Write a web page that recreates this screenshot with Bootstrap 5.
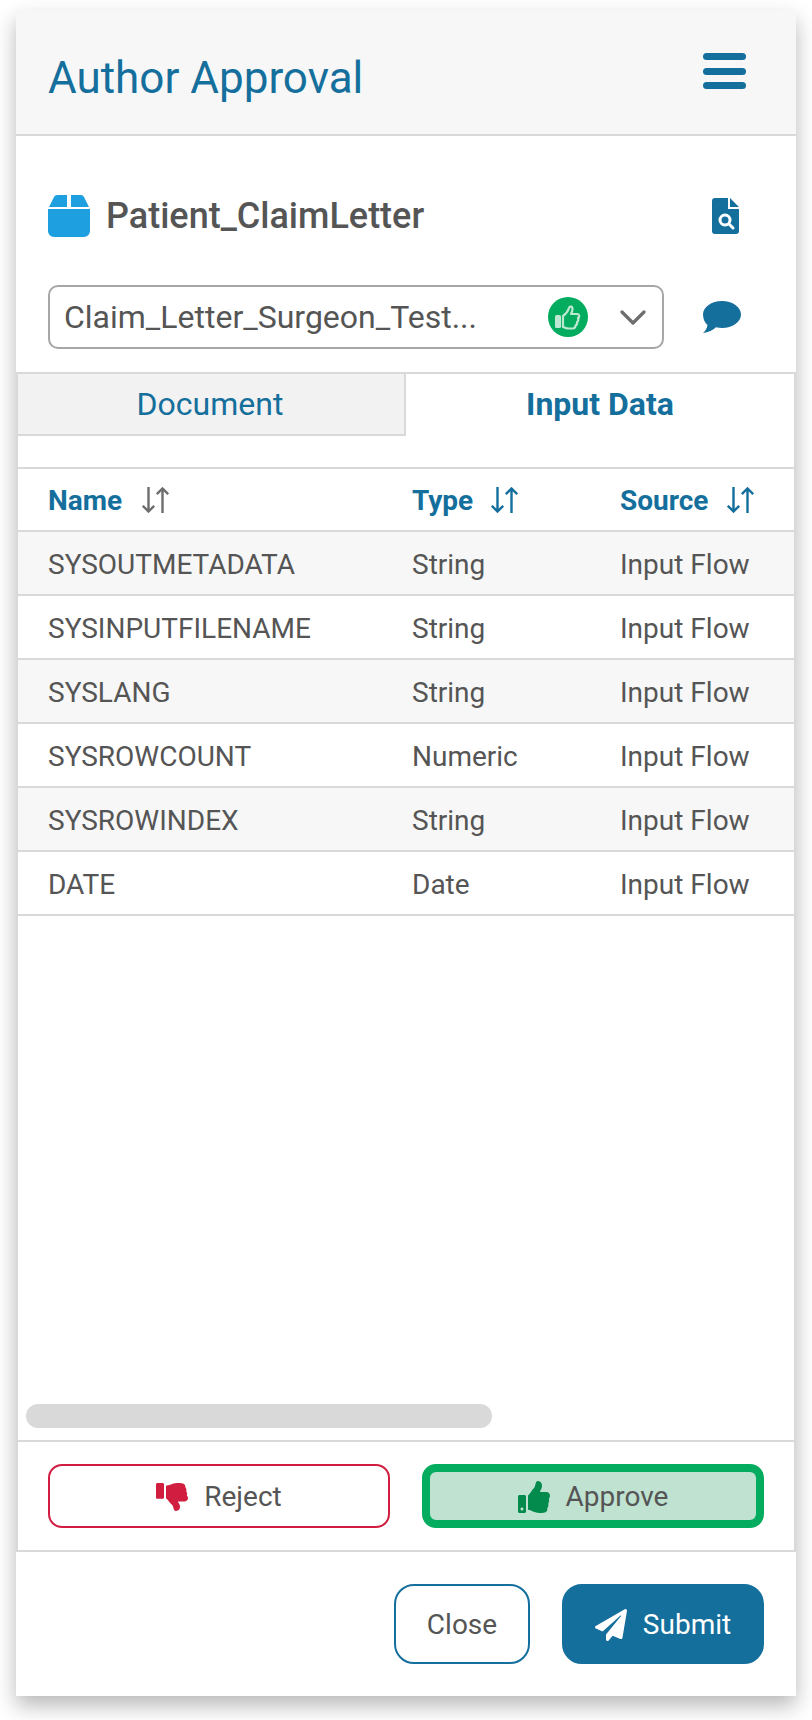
<!DOCTYPE html>
<html lang="en">
<head>
<meta charset="utf-8">
<title>Author Approval</title>
<link rel="stylesheet" href="https://cdn.jsdelivr.net/npm/bootstrap@5.3.0/dist/css/bootstrap.min.css">
<style>
html,body{height:100%;background:#fff;font-family:Roboto,"Liberation Sans",sans-serif;color:#555}
.sheet{height:1686px;margin:10px 16px 0;width:780px;background:#fff;box-shadow:0 10px 20px rgba(0,0,0,.28)}
.sheet-head{height:126px;background:#f7f7f7;border-bottom:2px solid #d9d9d9;padding:0 50px 0 32px;flex:none}
.sheet-title{font-size:44px;font-weight:400;color:#156f9c;margin:0;line-height:1;padding-top:11px}
.menu-btn{width:43px;height:36px;margin-top:-2px;border:0;background:none;padding:0}
.menu-btn span{display:block;height:7px;border-radius:4px;background:#156f9c}
.name-row{height:149px;padding:11px 57px 0 32px;flex:none}
.doc-name{font-size:36px;font-weight:500;color:#555;margin:0;line-height:1;padding-left:16px}
.pick-row{height:64px;padding:0 55px 0 32px;flex:none}
.pick-box{width:616px;height:64px;border:2px solid #a6a6a6;border-radius:10px;padding:0 16px 0 14px}
.pick-text{font-size:32px;line-height:1}
.ok-dot{width:40px;height:40px;border-radius:50%;background:#03ac5e;margin-right:32px;margin-left:1px}
.panel{border:2px solid #d9d9d9;margin-top:23px;flex:1 1 auto;min-height:0}
.tabs{height:62px}
.tab-item{flex:1 1 50%;font-size:32px;line-height:60px;text-align:center;color:#156f9c}
.tab-off{background:#f2f2f2;border-right:2px solid #d9d9d9;border-bottom:2px solid #d9d9d9;padding-right:2px}
.tab-on{font-weight:700}
.tab-gap{height:33px;border-bottom:2px solid #d9d9d9}
.grid-wrap{flex:1 1 auto;min-height:0}
.data-grid{table-layout:fixed;width:776px;margin:0;--bs-table-striped-bg:#f7f7f7;--bs-table-striped-color:#555;--bs-table-color:#555;--bs-table-border-color:#d9d9d9;--bs-border-width:2px}
.data-grid th,.data-grid td{height:64px;padding:3px 0 0;vertical-align:middle;font-size:28px;border-bottom:2px solid #d9d9d9;white-space:nowrap;line-height:1}
.data-grid th{color:#156f9c;font-weight:700;height:62px;padding-top:2px}
.data-grid .c1{width:394px;padding-left:30px}
.data-grid .c2{width:208px}
.data-grid .c3{width:174px}
.sort-ico{width:27px;height:26px;vertical-align:-3px}
.sort-n{margin-left:20px}
.sort-t{margin-left:18px}
.sort-s{margin-left:19px}
.track{height:24px;margin:0 0 12px 8px;width:466px;background:#d9d9d9;border-radius:12px;flex:none}
.decide{height:110px;border-top:2px solid #d9d9d9;padding:22px 30px 0 30px;gap:32px;flex:none}
.decide .btn{width:342px;height:64px;font-size:28px;color:#555;border-radius:14px;padding:2px 0 0;line-height:1}
.btn-no{background:#fff;border:2px solid #d11d3f}
.btn-yes{background:#bfe2d1;border:8px solid #03ac5e}
.foot{height:144px;padding:32px 32px 0 0;gap:32px;flex:none}
.foot .btn{height:80px;font-size:28px;border-radius:20px;padding:2px 0 0;line-height:1}
.btn-close-x{width:136px;background:#fff;border:2px solid #156f9c;color:#555}
.btn-send{width:202px;background:#156f9c;border:2px solid #156f9c;color:#fff}
</style>
</head>
<body>
<div class="sheet d-flex flex-column">
  <header class="sheet-head d-flex align-items-center justify-content-between">
    <h1 class="sheet-title">Author Approval</h1>
    <button class="menu-btn d-flex flex-column justify-content-between" type="button" aria-label="Menu"><span></span><span></span><span></span></button>
  </header>

  <div class="name-row d-flex align-items-center justify-content-between">
    <div class="d-flex align-items-center">
      <svg width="42" height="42" viewBox="0 0 42 42"><path fill="#1d9fe0" d="M0 14h42v22a6 6 0 0 1-6 6H6a6 6 0 0 1-6-6zM1 12 6 2a4 4 0 0 1 3-2h10v12zM23 0h10a4 4 0 0 1 3 2l5 10H23z"/></svg>
      <h2 class="doc-name">Patient_ClaimLetter</h2>
    </div>
    <svg width="27" height="36" viewBox="0 0 27 36"><path fill="#156f9c" d="M3 0h13v11h11v22a3 3 0 0 1-3 3H3a3 3 0 0 1-3-3V3a3 3 0 0 1 3-3zM18 0l9 9h-9z"/><circle cx="13" cy="22" r="5" fill="none" stroke="#fff" stroke-width="3"/><path d="m17 26 4 4" stroke="#fff" stroke-width="3" stroke-linecap="round"/></svg>
  </div>

  <div class="pick-row d-flex align-items-center justify-content-between">
    <div class="pick-box d-flex align-items-center">
      <span class="pick-text flex-grow-1">Claim_Letter_Surgeon_Test...</span>
      <span class="ok-dot d-flex align-items-center justify-content-center">
        <svg width="26" height="26" viewBox="0 0 26 26"><rect x="0" y="11" width="6" height="13" rx="1.500" fill="#bfe8d3"/><path fill="none" stroke="#bfe8d3" stroke-width="2.200" stroke-linejoin="round" d="M8 12c3-2 5-5 6-8 .5-2 3.500-2 3.500 1 0 2-1 4-1.500 5h6c2.500 0 3 3 1 4 1 2 0 3.500-1 4 .5 2-.5 3-1.500 3.500 0 2-1 3-3 3h-4c-2 0-3.500-1-5.500-1.500z"/></svg>
      </span>
      <svg width="26" height="15" viewBox="0 0 26 15"><path d="M2 2l11 11L24 2" fill="none" stroke="#6e6e6e" stroke-width="3.200" stroke-linecap="round" stroke-linejoin="round"/></svg>
    </div>
    <svg width="38" height="32" viewBox="0 0 38 32"><path fill="#156f9c" d="M19 0c10.500 0 19 6 19 13.500S29.500 27 19 27c-2 0-4-.2-6-.7C10 29 5.500 31.500 0 32c2.500-2 4-5 4.500-8C1.700 21.500 0 17.700 0 13.500 0 6 8.500 0 19 0z"/></svg>
  </div>

  <section class="panel d-flex flex-column">
    <div class="tabs d-flex">
      <div class="tab-item tab-off">Document</div>
      <div class="tab-item tab-on">Input Data</div>
    </div>
    <div class="tab-gap"></div>
    <div class="grid-wrap overflow-hidden">
      <table class="table table-striped data-grid">
        <thead>
          <tr>
            <th class="c1">Name<svg class="sort-ico sort-n" viewBox="0 0 27 26"><path d="M6.500 0v24.500M.8 18.800l5.700 5.700 5.700-5.700M20.500 26V1.500M14.800 7.200l5.700-5.700 5.700 5.700" fill="none" stroke="#6e6e6e" stroke-width="2.400"/></svg></th>
            <th class="c2">Type<svg class="sort-ico sort-t" viewBox="0 0 27 26"><path d="M6.500 0v24.500M.8 18.800l5.700 5.700 5.700-5.700M20.500 26V1.500M14.800 7.200l5.700-5.700 5.700 5.700" fill="none" stroke="#156f9c" stroke-width="2.400"/></svg></th>
            <th class="c3">Source<svg class="sort-ico sort-s" viewBox="0 0 27 26"><path d="M6.500 0v24.500M.8 18.800l5.700 5.700 5.700-5.700M20.500 26V1.500M14.800 7.200l5.700-5.700 5.700 5.700" fill="none" stroke="#156f9c" stroke-width="2.400"/></svg></th>
          </tr>
        </thead>
        <tbody>
          <tr><td class="c1">SYSOUTMETADATA</td><td>String</td><td>Input Flow</td></tr>
          <tr><td class="c1">SYSINPUTFILENAME</td><td>String</td><td>Input Flow</td></tr>
          <tr><td class="c1">SYSLANG</td><td>String</td><td>Input Flow</td></tr>
          <tr><td class="c1">SYSROWCOUNT</td><td>Numeric</td><td>Input Flow</td></tr>
          <tr><td class="c1">SYSROWINDEX</td><td>String</td><td>Input Flow</td></tr>
          <tr><td class="c1">DATE</td><td>Date</td><td>Input Flow</td></tr>
        </tbody>
      </table>
    </div>
    <div class="track"></div>
    <div class="decide d-flex">
      <button class="btn btn-no d-flex align-items-center justify-content-center" type="button">
        <svg class="me-3" width="32" height="28" viewBox="0 0 512 512" preserveAspectRatio="none" transform="scale(1 -1)"><path fill="#d11d3f" d="M104 224H24c-13.255 0-24 10.745-24 24v240c0 13.255 10.745 24 24 24h80c13.255 0 24-10.745 24-24V248c0-13.255-10.745-24-24-24zM384 81.452c0 42.416-25.97 66.208-33.277 94.548h101.723c33.397 0 59.397 27.746 59.553 58.098.084 17.938-7.546 37.249-19.439 49.197l-.11.11c9.836 23.337 8.237 56.037-9.308 79.469 8.681 25.895-.069 57.704-16.382 74.757 4.298 17.598 2.244 32.575-6.148 44.632C440.202 511.587 389.616 512 346.839 512l-2.845-.001c-48.287-.017-87.806-17.598-119.56-31.725-15.957-7.099-36.821-15.887-52.651-16.178-6.54-.12-11.783-5.457-11.783-11.998v-213.77c0-3.2 1.282-6.271 3.558-8.521 39.614-39.144 56.648-80.587 89.117-113.111 14.804-14.832 20.188-37.236 25.393-58.902C282.515 39.293 291.817 0 312 0c24 0 72 8 72 81.452z"/></svg>
        Reject
      </button>
      <button class="btn btn-yes d-flex align-items-center justify-content-center" type="button">
        <svg class="me-3" width="32" height="32" viewBox="0 0 512 512"><path fill="#038b4d" d="M104 224H24c-13.255 0-24 10.745-24 24v240c0 13.255 10.745 24 24 24h80c13.255 0 24-10.745 24-24V248c0-13.255-10.745-24-24-24zM64 472c-13.255 0-24-10.745-24-24s10.745-24 24-24 24 10.745 24 24-10.745 24-24 24zM384 81.452c0 42.416-25.97 66.208-33.277 94.548h101.723c33.397 0 59.397 27.746 59.553 58.098.084 17.938-7.546 37.249-19.439 49.197l-.11.11c9.836 23.337 8.237 56.037-9.308 79.469 8.681 25.895-.069 57.704-16.382 74.757 4.298 17.598 2.244 32.575-6.148 44.632C440.202 511.587 389.616 512 346.839 512l-2.845-.001c-48.287-.017-87.806-17.598-119.56-31.725-15.957-7.099-36.821-15.887-52.651-16.178-6.54-.12-11.783-5.457-11.783-11.998v-213.77c0-3.2 1.282-6.271 3.558-8.521 39.614-39.144 56.648-80.587 89.117-113.111 14.804-14.832 20.188-37.236 25.393-58.902C282.515 39.293 291.817 0 312 0c24 0 72 8 72 81.452z"/></svg>
        Approve
      </button>
    </div>
  </section>

  <footer class="foot d-flex justify-content-end">
    <button class="btn btn-close-x" type="button">Close</button>
    <button class="btn btn-send d-flex align-items-center justify-content-center" type="button">
      <svg class="me-3" width="32" height="32" viewBox="0 0 512 512"><path fill="#fff" d="M476 3.2L12.5 270.6c-18.1 10.4-15.8 35.6 2.200 43.200L121 358.400l287.300-253.200c5.500-4.900 13.300 2.600 8.600 8.300L176 407v80.500c0 23.600 28.500 32.900 42.500 15.800L282 426l124.600 52.200c14.200 6 30.400-2.900 33-18.200l72-432C515 7.800 493.300-6.800 476 3.200z"/></svg>
      Submit
    </button>
  </footer>
</div>
<script src="https://cdn.jsdelivr.net/npm/bootstrap@5.3.0/dist/js/bootstrap.bundle.min.js"></script>
</body>
</html>
